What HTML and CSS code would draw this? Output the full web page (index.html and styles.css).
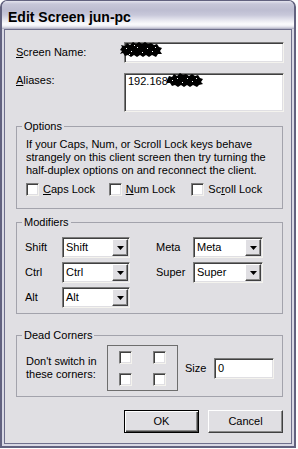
FILE: index.html
```html
<!DOCTYPE html>
<html>
<head>
<meta charset="utf-8">
<title>Edit Screen jun-pc</title>
<link rel="stylesheet" href="styles.css">
</head>
<body>
<div class="window">
  <div class="titlebar">Edit Screen jun-pc</div>
  <div class="client">
    <div class="field-row row-name">
      <span class="lbl"><u>S</u>creen Name:</span>
      <div class="edit edit-name">
        <svg class="scribble scribble-name" width="44" height="16" viewBox="0 0 44 16">
          <path d="M1 8 L3 5 L2 3 L6 4 L8 1 L11 3 L14 0 L17 2 L20 0 L23 2 L26 0 L29 2 L32 1 L35 3 L38 2 L40 5 L43 6 L41 9 L43 12 L39 12 L37 15 L33 13 L30 15 L27 13 L24 15 L21 13 L18 15 L15 13 L12 15 L9 13 L6 14 L4 11 L1 12 L3 9 Z" fill="#000"/>
          <g fill="#fff">
            <rect x="7" y="6" width="1" height="1"/><rect x="12" y="9" width="1" height="1"/><rect x="18" y="5" width="1" height="1"/>
            <rect x="23" y="10" width="1" height="1"/><rect x="28" y="6" width="1" height="1"/><rect x="33" y="9" width="1" height="1"/>
            <rect x="15" y="3" width="1" height="1"/><rect x="36" y="5" width="1" height="1"/><rect x="10" y="12" width="1" height="1"/>
          </g>
        </svg>
      </div>
    </div>
    <div class="field-row row-alias">
      <span class="lbl"><u>A</u>liases:</span>
      <div class="edit edit-alias">
        <span class="alias-text">192.168</span>
        <svg class="scribble scribble-alias" width="38" height="15" viewBox="0 0 38 15">
          <path d="M1 7 L3 3 L6 4 L8 1 L11 3 L14 0 L17 2 L20 1 L23 3 L26 1 L29 3 L32 2 L34 5 L37 6 L35 9 L37 11 L33 12 L31 14 L27 12 L24 14 L21 12 L18 14 L15 12 L12 14 L9 12 L6 13 L4 10 L1 10 Z" fill="#000"/>
          <g fill="#fff">
            <rect x="6" y="7" width="1" height="1"/><rect x="11" y="5" width="1" height="1"/><rect x="16" y="9" width="1" height="1"/>
            <rect x="21" y="5" width="1" height="1"/><rect x="26" y="8" width="1" height="1"/><rect x="30" y="5" width="1" height="1"/>
          </g>
        </svg>
      </div>
    </div>

    <fieldset class="group group-options">
      <legend>Options</legend>
      <p class="note">If your Caps, Num, or Scroll Lock keys behave<br>strangely on this client screen then try turning the<br>half-duplex options on and reconnect the client.</p>
      <div class="checks">
        <div class="check"><span class="box"></span><span><u>C</u>aps Lock</span></div>
        <div class="check"><span class="box"></span><span><u>N</u>um Lock</span></div>
        <div class="check"><span class="box"></span><span>Sc<u>r</u>oll Lock</span></div>
      </div>
    </fieldset>

    <fieldset class="group group-mods">
      <legend>Modifiers</legend>
      <div class="mods">
        <span class="mlbl">Shift</span>
        <div class="combo combo-a"><span class="ctext">Shift</span><span class="drop"><svg width="7" height="4" viewBox="0 0 7 4"><path d="M0 0H7L3.5 4Z" fill="#000"/></svg></span></div>
        <span class="spacer"></span>
        <span class="mlbl">Meta</span>
        <div class="combo combo-b"><span class="ctext">Meta</span><span class="drop"><svg width="7" height="4" viewBox="0 0 7 4"><path d="M0 0H7L3.5 4Z" fill="#000"/></svg></span></div>

        <span class="mlbl">Ctrl</span>
        <div class="combo combo-a"><span class="ctext">Ctrl</span><span class="drop"><svg width="7" height="4" viewBox="0 0 7 4"><path d="M0 0H7L3.5 4Z" fill="#000"/></svg></span></div>
        <span class="spacer"></span>
        <span class="mlbl">Super</span>
        <div class="combo combo-b"><span class="ctext">Super</span><span class="drop"><svg width="7" height="4" viewBox="0 0 7 4"><path d="M0 0H7L3.5 4Z" fill="#000"/></svg></span></div>

        <span class="mlbl">Alt</span>
        <div class="combo combo-a"><span class="ctext">Alt</span><span class="drop"><svg width="7" height="4" viewBox="0 0 7 4"><path d="M0 0H7L3.5 4Z" fill="#000"/></svg></span></div>
      </div>
    </fieldset>

    <fieldset class="group group-corners">
      <legend>Dead Corners</legend>
      <div class="corners-row">
        <p class="corners-text">Don't switch in<br>these corners:</p>
        <div class="corners-box">
          <span class="box"></span><span class="box"></span>
          <span class="box"></span><span class="box"></span>
        </div>
        <span class="size-lbl">Size</span>
        <div class="edit edit-size">0</div>
      </div>
    </fieldset>

    <div class="buttons">
      <div class="btn btn-default">OK</div>
      <div class="btn">Cancel</div>
    </div>
  </div>
</div>
</body>
</html>
```

FILE: styles.css
```css
* { box-sizing: border-box; }
html, body { margin: 0; padding: 0; background: #ffffff; }
body {
  font-family: "Liberation Sans", Arial, sans-serif;
  font-size: 11px;
  line-height: 13px;
  color: #000;
}
u { text-decoration: underline; text-underline-offset: 1px; }

.window {
  width: 296px;
  height: 448px;
  display: flex;
  flex-direction: column;
  border: 2px solid #62627f;
  border-top-width: 1px;
  border-radius: 7px 7px 0 0;
  background: #d8d8e4;
  overflow: hidden;
}

.titlebar {
  height: 28px;
  flex: none;
  padding: 8px 0 0 6px;
  font-weight: bold;
  font-size: 14px;
  line-height: 16px;
  color: #000;
  background: linear-gradient(to bottom,
    #e4e4ee 0px, #c6c6d8 3px, #bdbdd1 9px, #c8c8da 14px,
    #e6e6ef 19px, #fbfbfd 23px, #f0f0f6 25px, #c8c8d6 27px, #a4a4ba 28px);
}

.client {
  flex: 1;
  margin: 0 2px 2px;
  border: 1px solid #6f6f8c;
  background: #e0dfe3;
  padding: 12px 7px 0 11px;
  display: flex;
  flex-direction: column;
}

.field-row {
  display: grid;
  grid-template-columns: 108px 1fr;
}
.row-name { align-items: center; height: 21px; }
.row-alias { margin-top: 10px; align-items: start; }
.row-alias .lbl { padding-top: 1px; }

.edit {
  position: relative;
  background: #fff;
  border: 1px solid;
  border-color: #7c7c7c #f4f3ee #f4f3ee #7c7c7c;
  box-shadow: inset 1px 1px 0 #404040, inset -1px -1px 0 #e0dfe3;
  padding: 1px 3px;
}
.edit-name { height: 21px; }
.edit-alias { height: 39px; padding-top: 1px; }
.edit-size { width: 60px; height: 21px; padding: 3px 3px; }

.scribble { position: absolute; }
.scribble-name { left: -6px; top: -1px; }
.scribble-alias { left: 41px; top: -1px; }

.group {
  margin: 0 1px 0 0;
  border: 1px solid #a3a3ac;
  padding: 5px 8px 12px 9px;
  min-width: 0;
}
.group legend {
  padding: 0 2px;
  margin-left: -4px;
  line-height: 13px;
}
.group-options { margin-top: 8px; }
.group-mods { margin-top: 7px; padding-top: 8px; padding-bottom: 5px; }
.group-corners { margin-top: 15px; padding-top: 3px; padding-bottom: 5px; }

.note { margin: 0; white-space: nowrap; }

.checks { display: flex; margin-top: 6px; height: 13px; }
.check { display: flex; align-items: center; width: 84px; gap: 4px; }

.box {
  display: block;
  width: 13px;
  height: 13px;
  background: #fff;
  border: 1px solid;
  border-color: #7c7c7c #f4f3ee #f4f3ee #7c7c7c;
  box-shadow: inset 1px 1px 0 #404040, inset -1px -1px 0 #e0dfe3;
}

.mods {
  display: grid;
  grid-template-columns: 36px 68px 27px 36px 70px;
  grid-auto-rows: 21px;
  row-gap: 4px;
  align-items: center;
}
.mlbl { padding-left: 0; margin-left: -1px; }

.combo {
  display: flex;
  height: 21px;
  background: #fff;
  border: 1px solid;
  border-color: #7c7c7c #f4f3ee #f4f3ee #7c7c7c;
  box-shadow: inset 1px 1px 0 #404040, inset -1px -1px 0 #e0dfe3;
  padding: 1px;
}
.ctext { flex: 1; padding: 2px 0 0 2px; }
.drop {
  width: 16px;
  height: 17px;
  display: flex;
  align-items: center;
  justify-content: center;
  background: #e0dfe3;
  border: 1px solid;
  border-color: #ffffff #404040 #404040 #ffffff;
  box-shadow: inset -1px -1px 0 #8a8a8a;
  padding-top: 1px;
}

.corners-row { display: flex; align-items: center; height: 46px; }
.corners-text { margin: 0; width: 81px; white-space: nowrap; }
.corners-box {
  width: 71px;
  height: 46px;
  border: 1px solid #6e6e6e;
  display: grid;
  grid-template-columns: 13px 13px;
  grid-template-rows: 13px 13px;
  column-gap: 21px;
  row-gap: 9px;
  padding: 5px 11px 4px 11px;
}
.size-lbl { margin-left: 7px; width: 29px; }

.buttons {
  display: flex;
  justify-content: flex-end;
  gap: 9px;
  margin-top: 13px;
  margin-right: 1px;
}
.btn {
  width: 75px;
  height: 23px;
  display: flex;
  align-items: center;
  justify-content: center;
  background: #e0dfe3;
  border: 1px solid;
  border-color: #ffffff #404040 #404040 #ffffff;
  box-shadow: inset -1px -1px 0 #8a8a8a;
}
.btn-default {
  border-color: #000;
  box-shadow: inset 1px 1px 0 #ffffff, inset -1px -1px 0 #404040, inset -2px -2px 0 #8a8a8a;
}
```
